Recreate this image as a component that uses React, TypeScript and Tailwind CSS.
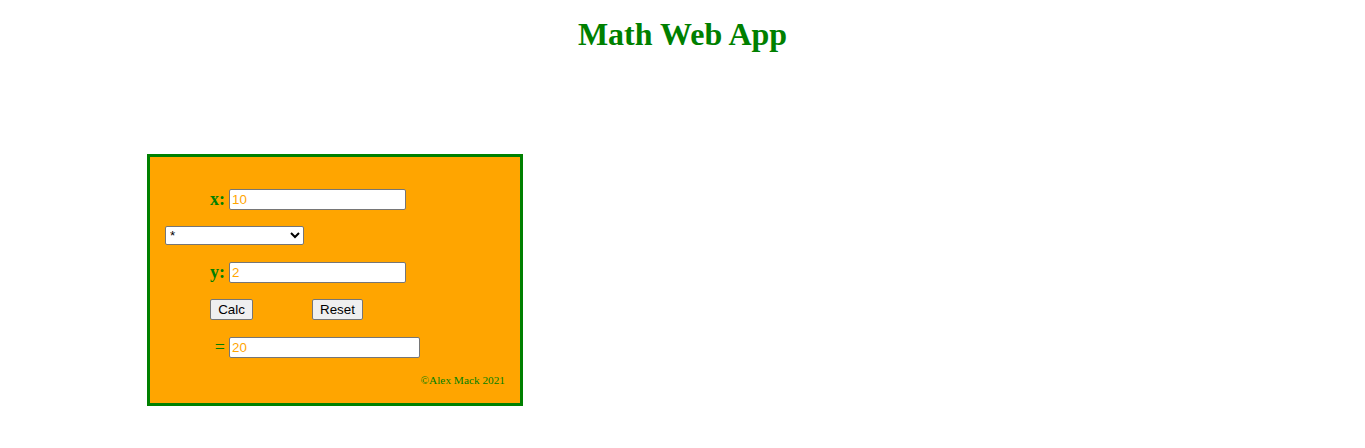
import { useState } from 'react';

export default function App() {
  const [x, setX] = useState('10');
  const [y, setY] = useState('2');
  const [op, setOp] = useState('*');
  const [result, setResult] = useState('20');

  const calc = () => {
    const a = parseFloat(x);
    const b = parseFloat(y);
    let r = 0;
    if (op === '+') r = a + b;
    else if (op === '-') r = a - b;
    else if (op === '*') r = a * b;
    else r = a / b;
    setResult(String(r));
  };

  const reset = () => {
    setX('');
    setY('');
    setResult('');
  };

  const inputCls =
    "h-[21px] border border-[#767676] rounded-[2px] bg-white px-[2px] text-[13.33px] text-[#ffa500] font-['Liberation_Sans',Arial,sans-serif] outline-none";
  const labelCls =
    "w-[64px] pr-[4px] pb-[2px] text-right text-[18px] text-[#008000] font-['Liberation_Serif','Times_New_Roman',serif] leading-none";
  const btnCls =
    "h-[21px] px-[6px] border border-[#767676] rounded-[2px] bg-[#efefef] text-[13.33px] text-black font-['Liberation_Sans',Arial,sans-serif]";

  return (
    <div className="w-[1365px] h-[448px] bg-white font-['Liberation_Serif','Times_New_Roman',serif]">
      <h1 className="pt-[16px] text-center text-[32px] font-bold text-[#008000] leading-[37px]">
        Math Web App
      </h1>

      <div className="ml-[147px] mt-[101px] w-[376px] h-[252px] border-[3px] border-[#008000] bg-[#ffa500] pl-[15px] pr-[15px] pt-[32px] flex flex-col">
        <div className="flex items-center">
          <label className={`${labelCls} font-bold`}>x:</label>
          <input className={`${inputCls} w-[177px]`} value={x} onChange={(e) => setX(e.target.value)} />
        </div>

        <div className="mt-[16px] flex">
          <select
            className="w-[139px] h-[19px] border border-[#767676] rounded-[2px] bg-white text-[13.33px] leading-none text-black font-['Liberation_Sans',Arial,sans-serif]"
            value={op}
            onChange={(e) => setOp(e.target.value)}
          >
            <option value="*">*</option>
            <option value="+">+</option>
            <option value="-">-</option>
            <option value="/">/</option>
          </select>
        </div>

        <div className="mt-[17px] flex items-center">
          <label className={`${labelCls} font-bold`}>y:</label>
          <input className={`${inputCls} w-[177px]`} value={y} onChange={(e) => setY(e.target.value)} />
        </div>

        <div className="mt-[16px] flex pl-[45px]">
          <button className={`${btnCls} w-[43px]`} onClick={calc}>Calc</button>
          <button className={`${btnCls} w-[51px] ml-[59px]`} onClick={reset}>Reset</button>
        </div>

        <div className="mt-[17px] flex items-center">
          <label className={`${labelCls} font-normal`}>=</label>
          <input className={`${inputCls} w-[191px]`} value={result} readOnly />
        </div>

        <p className="mt-[15px] text-right text-[11.3px] text-[#008000] leading-[14px]">©Alex Mack 2021</p>
      </div>
    </div>
  );
}
